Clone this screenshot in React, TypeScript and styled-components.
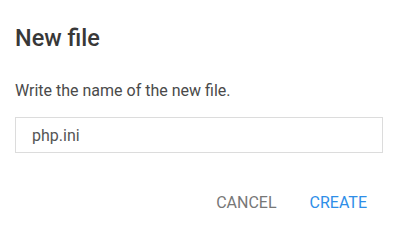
import React, { useState } from "react";
import styled, { createGlobalStyle } from "styled-components";

const GlobalStyle = createGlobalStyle`
  html, body {
    margin: 0;
    padding: 0;
    background: #ffffff;
  }
  body {
    font-family: Roboto, "Liberation Sans", sans-serif;
  }
`;

const Dialog = styled.div`
  width: 397px;
  height: 242px;
  box-sizing: border-box;
  padding: 24px 14px 0 15px;
  background: #ffffff;
  display: flex;
  flex-direction: column;
`;

const Title = styled.h2`
  margin: 0;
  font-size: 23.5px;
  line-height: 28px;
  font-weight: 500;
  color: #383838;
`;

const Description = styled.p`
  margin: 29px 0 0;
  font-size: 16px;
  line-height: 20px;
  color: #4a4a4a;
`;

const NameInput = styled.input`
  margin-top: 16px;
  height: 36px;
  box-sizing: border-box;
  width: 100%;
  border: 1px solid #dcdcdc;
  padding: 0 16px;
  font-family: inherit;
  font-size: 16px;
  color: #555555;
  outline: none;
`;

const Actions = styled.div`
  margin-top: 32px;
  display: flex;
  justify-content: flex-end;
  gap: 1px;
`;

const ActionButton = styled.button<{ $primary?: boolean }>`
  border: none;
  background: transparent;
  padding: 8px 16px;
  font-family: inherit;
  font-size: 16px;
  line-height: normal;
  text-transform: uppercase;
  color: ${(p) => (p.$primary ? "#2e8ee8" : "#777777")};
  cursor: pointer;
`;

export default function App() {
  const [name, setName] = useState("php.ini");
  return (
    <>
      <GlobalStyle />
      <Dialog>
        <Title>New file</Title>
        <Description>Write the name of the new file.</Description>
        <NameInput value={name} onChange={(e) => setName(e.target.value)} />
        <Actions>
          <ActionButton>Cancel</ActionButton>
          <ActionButton $primary>Create</ActionButton>
        </Actions>
      </Dialog>
    </>
  );
}
